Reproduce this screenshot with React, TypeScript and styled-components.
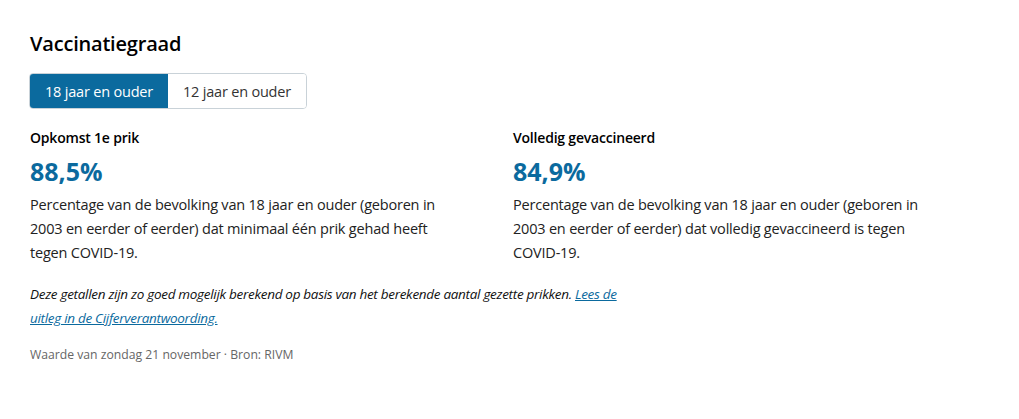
import React from "react";
import styled, { createGlobalStyle } from "styled-components";

const Global = createGlobalStyle`
  html, body { margin: 0; padding: 0; background: #fff; }
  body { font-family: "Open Sans", "Noto Sans", sans-serif; color: #000; }
`;

const Page = styled.main`
  padding: 31px 30px 0 30px;
`;

const Title = styled.h2`
  margin: 0;
  font-size: 20px;
  font-weight: 600;
  line-height: 26px;
  color: #000;
  letter-spacing: -0.2px;
`;

const Tabs = styled.div`
  display: inline-flex;
  margin-top: 16px;
  margin-left: -1px;
  border: 1px solid #c9d2d8;
  border-radius: 4px;
  overflow: hidden;
`;

const Tab = styled.button<{ $active?: boolean }>`
  height: 34px;
  padding: 0 15px;
  border: none;
  font-family: inherit;
  font-size: 14.5px;
  letter-spacing: -0.2px;
  background: ${(p) => (p.$active ? "#0b6a9e" : "#fff")};
  color: ${(p) => (p.$active ? "#fff" : "#333")};
  cursor: pointer;
`;

const Columns = styled.div`
  display: grid;
  grid-template-columns: 483px 483px;
  margin-top: 18px;
`;

const Col = styled.section`
  max-width: 425px;
`;

const Label = styled.h3`
  margin: 0;
  font-size: 14px;
  font-weight: 600;
  line-height: 22px;
  letter-spacing: -0.2px;
`;

const Value = styled.div`
  margin-top: 7px;
  font-size: 25px;
  font-weight: 700;
  line-height: 30px;
  color: #0b6a9e;
`;

const Desc = styled.p`
  margin: 7px 0 0;
  font-size: 14.5px;
  line-height: 24px;
  color: #222;
  letter-spacing: -0.2px;
`;

const Note = styled.p`
  margin: 17px 0 0;
  max-width: 596px;
  font-size: 13.5px;
  font-style: italic;
  line-height: 24px;
  color: #111;
  letter-spacing: -0.3px;
`;

const Link = styled.a`
  color: #0b6a9e;
  text-decoration: underline;
`;

const Source = styled.p`
  margin: 16px 0 0;
  font-size: 12.2px;
  line-height: 18px;
  color: #666;
`;

export default function App() {
  return (
    <>
      <Global />
      <Page>
        <Title>Vaccinatiegraad</Title>
        <Tabs>
          <Tab $active>18 jaar en ouder</Tab>
          <Tab>12 jaar en ouder</Tab>
        </Tabs>
        <Columns>
          <Col>
            <Label>Opkomst 1e prik</Label>
            <Value>88,5%</Value>
            <Desc>
              Percentage van de bevolking van 18 jaar en ouder (geboren in 2003 en eerder of eerder) dat minimaal één prik gehad heeft tegen COVID-19.
            </Desc>
          </Col>
          <Col>
            <Label>Volledig gevaccineerd</Label>
            <Value>84,9%</Value>
            <Desc>
              Percentage van de bevolking van 18 jaar en ouder (geboren in 2003 en eerder of eerder) dat volledig gevaccineerd is tegen COVID-19.
            </Desc>
          </Col>
        </Columns>
        <Note>
          Deze getallen zijn zo goed mogelijk berekend op basis van het berekende aantal gezette prikken.{" "}
          <Link href="#">Lees de uitleg in de Cijferverantwoording.</Link>
        </Note>
        <Source>Waarde van zondag 21 november · Bron: RIVM</Source>
      </Page>
    </>
  );
}
